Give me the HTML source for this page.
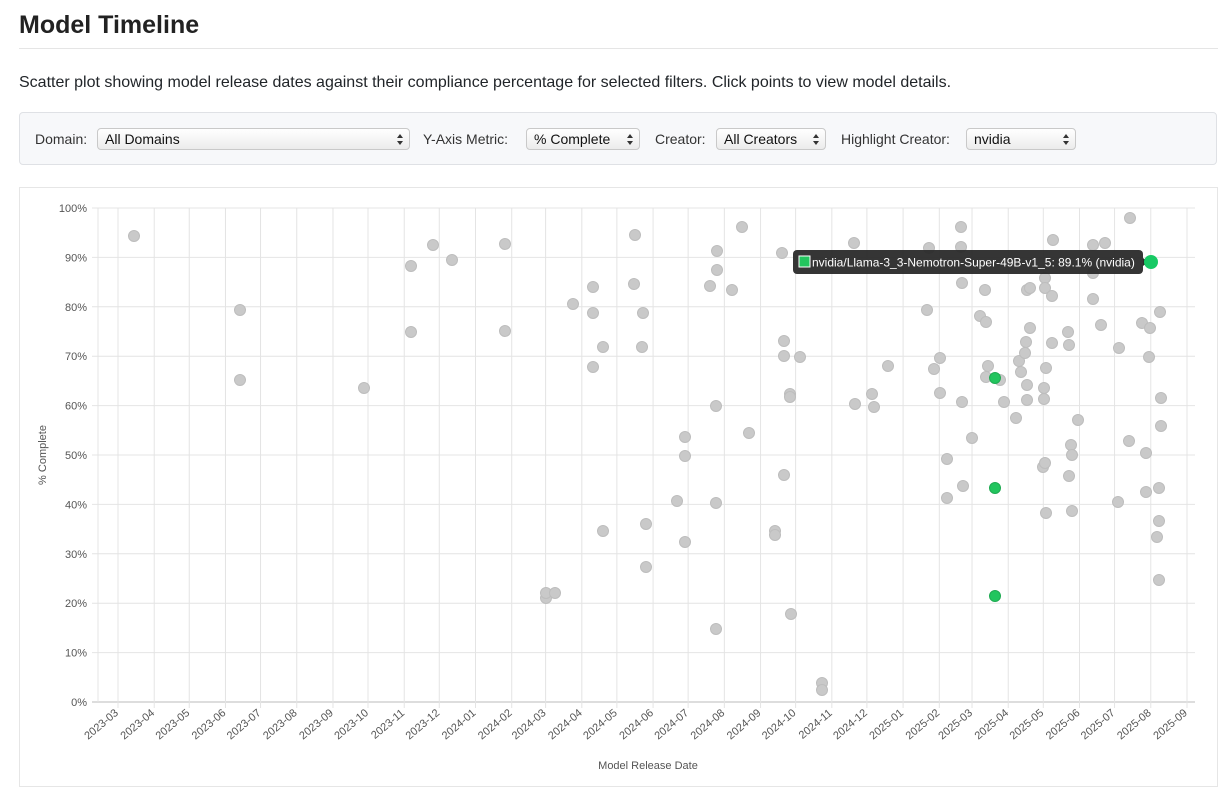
<!DOCTYPE html>
<html><head><meta charset="utf-8">
<style>
body{margin:0;background:#fff;font-family:"Liberation Sans",Arial,sans-serif;color:#212529;width:1227px;height:796px;overflow:hidden;position:relative}
h1{position:absolute;left:19px;top:11px;margin:0;font-size:25px;font-weight:bold;color:#222}
.hr{position:absolute;left:19px;top:48px;width:1199px;height:1px;background:#e5e5e5}
p{position:absolute;left:19px;top:74px;margin:0;font-size:16px;color:#212529}
.filters{position:absolute;left:19px;top:112px;width:1198px;height:53px;background:#f7f8fa;border:1px solid #dfe1e5;border-radius:4px;box-sizing:border-box;font-size:14px;color:#333}
.f{position:absolute;top:15px;line-height:22px}
.sel{position:absolute;top:15px;height:22px;border:1px solid #c9c9c9;border-radius:4px;background:linear-gradient(#fff,#ececec);box-sizing:border-box;font-size:14px;line-height:20px;padding-left:7px;color:#111}
.sel:after{content:"";position:absolute;right:6px;top:5px;border-left:3px solid transparent;border-right:3px solid transparent;border-bottom:4px solid #333}
.sel:before{content:"";position:absolute;right:6px;top:12px;border-left:3px solid transparent;border-right:3px solid transparent;border-top:4px solid #333}
.chart{position:absolute;left:19px;top:187px;width:1199px;height:600px;border:1px solid #e6e6e6;box-sizing:border-box}
svg{position:absolute;left:0;top:0}
</style></head><body>
<h1>Model Timeline</h1>
<div class="hr"></div>
<p>Scatter plot showing model release dates against their compliance percentage for selected filters. Click points to view model details.</p>
<div class="filters">
<span class="f" style="left:15px">Domain:</span><div class="sel" style="left:77px;width:313px">All Domains</div>
<span class="f" style="left:403px">Y-Axis Metric:</span><div class="sel" style="left:506px;width:114px">% Complete</div>
<span class="f" style="left:635px">Creator:</span><div class="sel" style="left:696px;width:110px">All Creators</div>
<span class="f" style="left:821px">Highlight Creator:</span><div class="sel" style="left:946px;width:110px">nvidia</div>
</div>
<div class="chart"></div>
<svg id="s" width="1227" height="796" font-family="Liberation Sans,Arial,sans-serif"></svg>
<script>
var s=document.getElementById('s'),h='';
var L=98,R=1195,T=208,B=702;
for(var i=0;i<=10;i++){var y=B-(B-T)*i/10;h+='<line x1="92" x2="'+R+'" y1="'+y+'" y2="'+y+'" stroke="'+(i==0?'#bbb':'#e4e4e4')+'"/>';h+='<text x="87" y="'+(y+4)+'" font-size="11" fill="#555" text-anchor="end">'+(i*10)+'%</text>';}
h+='<line x1="'+L+'" x2="'+L+'" y1="'+T+'" y2="'+B+'" stroke="#e4e4e4"/>';
var d0=Date.UTC(2023,2,1);
for(var m=0;m<=30;m++){var yy=2023+Math.floor((2+m)/12),mm=(2+m)%12;var x=118+(Date.UTC(yy,mm,1)-d0)/864e5*1069/915;
h+='<line x1="'+x+'" x2="'+x+'" y1="'+T+'" y2="'+(B+6)+'" stroke="#e4e4e4"/>';
h+='<text transform="translate('+(x+1)+','+(B+12)+') rotate(-40)" font-size="11" fill="#555" text-anchor="end">'+yy+'-'+(mm<9?'0':'')+(mm+1)+'</text>';}
h+='<text x="648" y="769" font-size="11" fill="#555" text-anchor="middle">Model Release Date</text>';
h+='<text transform="translate(46,455) rotate(-90)" font-size="11" fill="#555" text-anchor="middle">% Complete</text>';
var P=[134,236,240,310,240,380,364,388,411,266,411,332,433,245,452,260,505,244,505,331,546,598,546,593,555,593,573,304,593,287,593,313,593,367,603,531,603,347,634,284,635,235,643,313,642,347,646,524,646,567,677,501,685,437,685,456,685,542,710,286,716,629,716,503,716,406,717,251,717,270,732,290,742,227,749,433,775,531,775,535,782,253,784,341,784,356,784,475,790,394,790,397,791,614,800,357,822,683,822,690,855,404,854,243,872,394,874,407,888,366,927,310,929,248,934,369,940,358,940,393,947,459,947,498,961,227,961,247,962,283,962,402,963,486,972,438,980,316,985,290,986,322,986,377,988,366,1000,380,1004,402,1016,418,1019,361,1021,372,1025,353,1026,342,1027,290,1027,385,1027,400,1030,288,1030,328,1043,467,1044,388,1044,399,1045,278,1045,288,1045,463,1046,513,1046,368,1052,296,1053,240,1052,343,1068,332,1069,345,1071,445,1069,476,1072,455,1072,511,1078,420,1093,299,1093,245,1093,273,1101,325,1105,243,1119,348,1118,502,1130,218,1129,441,1142,323,1149,357,1146,453,1146,492,1150,328,1157,537,1159,521,1159,488,1159,580,1161,398,1161,426,1160,312];
for(var i=0;i<P.length;i+=2)h+='<circle cx="'+P[i]+'" cy="'+P[i+1]+'" r="5.5" fill="#c9c9c9" stroke="#bdbdbd"/>';
[[995,378],[995,488],[995,596]].forEach(function(p){h+='<circle cx="'+p[0]+'" cy="'+p[1]+'" r="5.5" fill="#22c55e" stroke="#1faa52"/>';});
h+='<rect x="793" y="250" width="350" height="24" rx="4" fill="#2a2a2a" opacity="0.95"/>';
h+='<path d="M1143 258 L1148 262 L1143 266Z" fill="#2a2a2a"/>';
h+='<rect x="799" y="256" width="11" height="11" fill="#22c55e" stroke="#fff" stroke-width="1"/>';
h+='<text x="812" y="266.5" font-size="12" fill="#fff">nvidia/Llama-3_3-Nemotron-Super-49B-v1_5: 89.1% (nvidia)</text>';
h+='<circle cx="1151" cy="262" r="7" fill="#17c964"/>';
s.innerHTML=h;
</script>
</body></html>
